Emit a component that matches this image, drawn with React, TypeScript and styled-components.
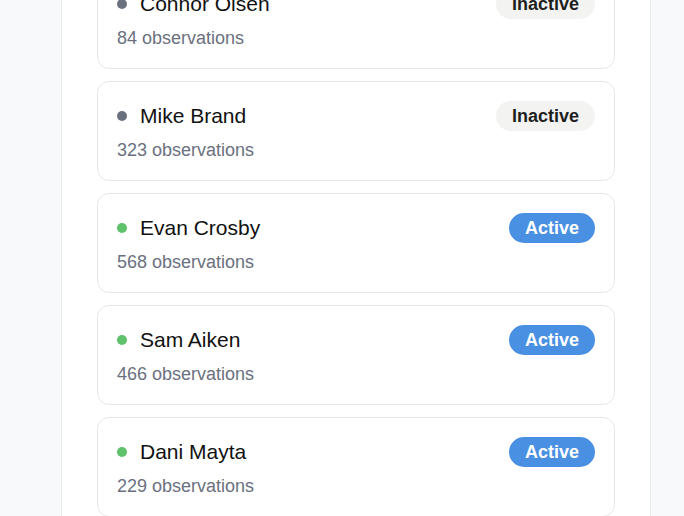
import React from "react";
import styled, { createGlobalStyle } from "styled-components";

const Global = createGlobalStyle`
  html, body { margin: 0; padding: 0; }
  body {
    background: #f8f9fb;
    font-family: "Liberation Sans", Arial, Helvetica, sans-serif;
    overflow: hidden;
  }
`;

const Page = styled.div`
  display: flex;
  padding-left: 61px;
  min-height: 516px;
`;

const Panel = styled.section`
  width: 518px;
  background: #ffffff;
  border-left: 1px solid #e8eaee;
  border-right: 1px solid #e8eaee;
  padding: 0 35px 40px;
`;

const List = styled.ul`
  list-style: none;
  margin: -31px 0 0;
  padding: 0;
  display: flex;
  flex-direction: column;
  gap: 12px;
`;

const Card = styled.li`
  border: 1px solid #e5e7eb;
  border-radius: 12px;
  padding: 19px;
  background: #fff;
`;

const Row = styled.div`
  display: flex;
  align-items: center;
  justify-content: space-between;
  height: 30px;
`;

const NameWrap = styled.div`
  display: flex;
  align-items: center;
  gap: 13px;
`;

const Dot = styled.span<{ $active: boolean }>`
  width: 10px;
  height: 10px;
  border-radius: 50%;
  background: ${(p) => (p.$active ? "#5ec26a" : "#6b7080")};
`;

const Name = styled.span`
  font-size: 21px;
  color: #111111;
`;

const Badge = styled.span<{ $active: boolean }>`
  height: 30px;
  line-height: 30px;
  padding: 0 16px;
  border-radius: 15px;
  font-size: 18px;
  font-weight: 700;
  background: ${(p) => (p.$active ? "#4a90e2" : "#f3f3f2")};
  color: ${(p) => (p.$active ? "#ffffff" : "#1f1f1f")};
`;

const Obs = styled.div`
  margin-top: 9px;
  font-size: 18px;
  line-height: 21px;
  color: #6b7080;
`;

const people = [
  { name: "Connor Olsen", count: 84, active: false },
  { name: "Mike Brand", count: 323, active: false },
  { name: "Evan Crosby", count: 568, active: true },
  { name: "Sam Aiken", count: 466, active: true },
  { name: "Dani Mayta", count: 229, active: true },
];

export default function App() {
  return (
    <>
      <Global />
      <Page>
        <Panel>
          <List>
            {people.map((p) => (
              <Card key={p.name}>
                <Row>
                  <NameWrap>
                    <Dot $active={p.active} />
                    <Name>{p.name}</Name>
                  </NameWrap>
                  <Badge $active={p.active}>{p.active ? "Active" : "Inactive"}</Badge>
                </Row>
                <Obs>{p.count} observations</Obs>
              </Card>
            ))}
          </List>
        </Panel>
      </Page>
    </>
  );
}
